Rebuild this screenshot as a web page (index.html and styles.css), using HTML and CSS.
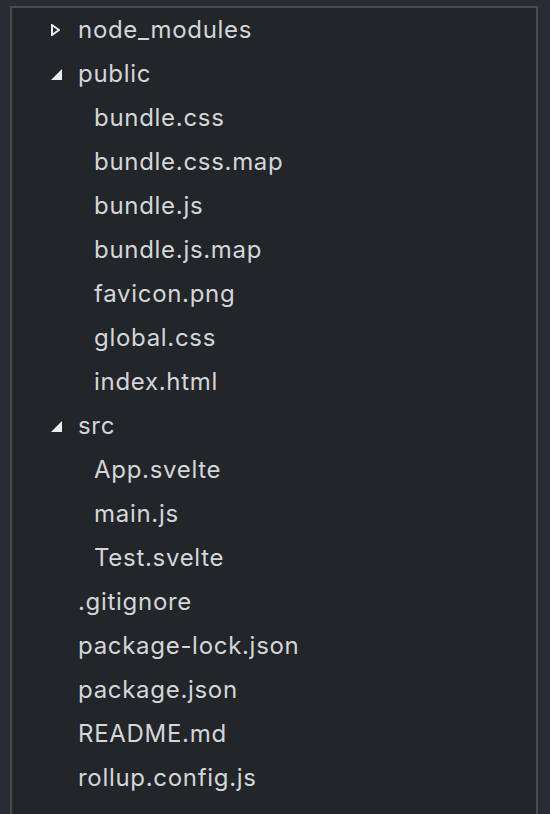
FILE: index.html
```html
<!DOCTYPE html>
<html>
<head>
<meta charset="utf-8">
<link rel="stylesheet" href="styles.css">
</head>
<body>
<div class="panel">
  <ul class="tree">
    <li class="row dir"><span class="arrow"><svg width="9" height="12" viewBox="0 0 9 12"><path d="M1 1 L8 6 L1 11 Z" fill="none" stroke="#e8e8e8" stroke-width="2" stroke-linejoin="miter"/></svg></span><span class="name">node_modules</span></li>
    <li class="row dir"><span class="arrow"><svg width="11" height="11" viewBox="0 0 11 11"><path d="M11 0 L11 11 L0 11 Z" fill="#ececec"/></svg></span><span class="name">public</span></li>
    <li class="row file l1"><span class="name">bundle.css</span></li>
    <li class="row file l1"><span class="name">bundle.css.map</span></li>
    <li class="row file l1"><span class="name">bundle.js</span></li>
    <li class="row file l1"><span class="name">bundle.js.map</span></li>
    <li class="row file l1"><span class="name">favicon.png</span></li>
    <li class="row file l1"><span class="name">global.css</span></li>
    <li class="row file l1"><span class="name">index.html</span></li>
    <li class="row dir"><span class="arrow"><svg width="11" height="11" viewBox="0 0 11 11"><path d="M11 0 L11 11 L0 11 Z" fill="#ececec"/></svg></span><span class="name">src</span></li>
    <li class="row file l1"><span class="name">App.svelte</span></li>
    <li class="row file l1"><span class="name">main.js</span></li>
    <li class="row file l1"><span class="name">Test.svelte</span></li>
    <li class="row file"><span class="name">.gitignore</span></li>
    <li class="row file"><span class="name">package-lock.json</span></li>
    <li class="row file"><span class="name">package.json</span></li>
    <li class="row file"><span class="name">README.md</span></li>
    <li class="row file"><span class="name">rollup.config.js</span></li>
  </ul>
</div>
</body>
</html>
```
FILE: styles.css
```css
html, body {
  margin: 0;
  padding: 0;
  height: 100%;
  background: #292c35;
  overflow: hidden;
}
.panel {
  box-sizing: border-box;
  margin: 6px 12px 0 10px;
  height: 820px;
  border: 2px solid #4a4b4d;
  border-bottom: none;
  background: #222529;
}
.tree {
  list-style: none;
  margin: 0;
  padding: 0;
}
.row {
  height: 44px;
  display: flex;
  align-items: center;
  font-family: Inter, "Noto Sans", sans-serif;
  font-size: 24px;
  letter-spacing: 0.7px;
  color: #d4d6da;
  padding-left: 66px;
  position: relative;
}
.row.l1 {
  padding-left: 82px;
}
.arrow {
  position: absolute;
  left: 39px;
  top: 0;
  height: 44px;
  display: flex;
  align-items: center;
}
.arrow svg {
  display: block;
}
.name {
  line-height: 1;
}
```
